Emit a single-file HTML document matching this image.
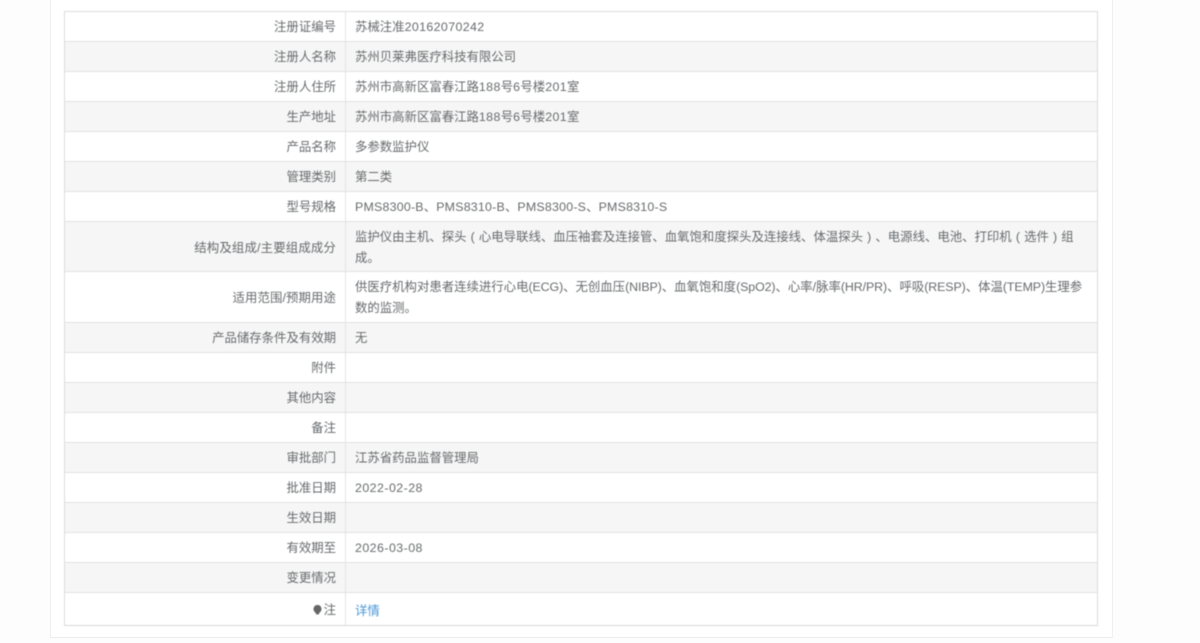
<!DOCTYPE html>
<html lang="zh"><head><meta charset="utf-8"><style>
html,body{margin:0;padding:0;width:1200px;height:643px;overflow:hidden;background:#fdfdfd}
body{font-family:"Liberation Sans","Noto Sans CJK SC",sans-serif;font-size:12.4px;color:#676a6c;position:relative;text-spacing-trim:space-all;font-kerning:none}
#panel{position:absolute;left:50px;top:-2px;width:1061px;height:639px;background:#fff;border-right:1px solid #f0f0f0;border-left:1px solid #f0f0f0;border-bottom:1px solid #ececec}
#t{position:absolute;left:64px;top:11px;width:1032px;height:613px;border:1px solid #dcdcdc;border-bottom:1px solid #d8d8d8;filter:blur(.4px)}
.r{position:absolute;left:0;width:1032px;border-bottom:1px solid #e2e2e2;box-sizing:border-box}
.g{background:#f6f6f6}
.l{position:absolute;left:0;width:271px;text-align:right;top:1px;white-space:nowrap}
.v{position:absolute;left:290px;top:1px;white-space:nowrap}
.d{position:absolute;left:280px;top:0;bottom:0;width:1px;background:#e4e4e4}
.n{letter-spacing:.38px}
.m{letter-spacing:.22px}
.c{letter-spacing:-.09px}
.p{display:inline-block;width:1em;text-align:center}
a{color:#4a98d8;text-decoration:none}
</style></head><body>
<div id="panel"></div>
<div id="t">
<div class="r" style="top:0;height:30px;line-height:29px"><div class="l">注册证编号</div><div class="d"></div><div class="v">苏械注准<span class="n">20162070242</span></div></div>
<div class="r g" style="top:30px;height:30px;line-height:29px"><div class="l">注册人名称</div><div class="d"></div><div class="v">苏州贝莱弗医疗科技有限公司</div></div>
<div class="r" style="top:60px;height:30px;line-height:29px"><div class="l">注册人住所</div><div class="d"></div><div class="v">苏州市高新区富春江路<span class="n">188</span>号<span class="n">6</span>号楼<span class="n">201</span>室</div></div>
<div class="r g" style="top:90px;height:30px;line-height:29px"><div class="l">生产地址</div><div class="d"></div><div class="v">苏州市高新区富春江路<span class="n">188</span>号<span class="n">6</span>号楼<span class="n">201</span>室</div></div>
<div class="r" style="top:120px;height:30px;line-height:29px"><div class="l">产品名称</div><div class="d"></div><div class="v">多参数监护仪</div></div>
<div class="r g" style="top:150px;height:30px;line-height:29px"><div class="l">管理类别</div><div class="d"></div><div class="v">第二类</div></div>
<div class="r" style="top:180px;height:30px;line-height:29px"><div class="l">型号规格</div><div class="d"></div><div class="v"><span class="m">PMS8300-B</span>、<span class="m">PMS8310-B</span>、<span class="m">PMS8300-S</span>、<span class="m">PMS8310-S</span></div></div>
<div class="r g" style="top:210px;height:50px;line-height:51px"><div class="l" style="letter-spacing:.17px">结构及组成/主要组成成分</div><div class="d"></div><div class="v" style="top:5px;line-height:21px">监护仪由主机、探头<span class="p">(</span>心电导联线、血压袖套及连接管、血氧饱和度探头及连接线、体温探头<span class="p">)</span>、电源线、电池、打印机<span class="p">(</span>选件<span class="p">)</span>组<br>成。</div></div>
<div class="r" style="top:260px;height:51px;line-height:50px"><div class="l" style="letter-spacing:.1px">适用范围/预期用途</div><div class="d"></div><div class="v" style="top:5px;line-height:21px">供医疗机构对患者连续进行心电<span class="c">(ECG)</span>、无创血压<span class="c">(NIBP)</span>、血氧饱和度<span class="c">(SpO2)</span>、心率/脉率<span class="c">(HR/PR)</span>、呼吸<span class="c">(RESP)</span>、体温<span class="c">(TEMP)</span>生理参<br>数的监测。</div></div>
<div class="r g" style="top:311px;height:30px;line-height:29px"><div class="l">产品储存条件及有效期</div><div class="d"></div><div class="v">无</div></div>
<div class="r" style="top:341px;height:30px;line-height:29px"><div class="l">附件</div><div class="d"></div></div>
<div class="r g" style="top:371px;height:30px;line-height:29px"><div class="l">其他内容</div><div class="d"></div></div>
<div class="r" style="top:401px;height:30px;line-height:29px"><div class="l">备注</div><div class="d"></div></div>
<div class="r g" style="top:431px;height:30px;line-height:29px"><div class="l">审批部门</div><div class="d"></div><div class="v">江苏省药品监督管理局</div></div>
<div class="r" style="top:461px;height:30px;line-height:29px"><div class="l">批准日期</div><div class="d"></div><div class="v"><span class="n" style="letter-spacing:.45px">2022-02-28</span></div></div>
<div class="r g" style="top:491px;height:30px;line-height:29px"><div class="l">生效日期</div><div class="d"></div></div>
<div class="r" style="top:521px;height:30px;line-height:29px"><div class="l">有效期至</div><div class="d"></div><div class="v"><span class="n" style="letter-spacing:.45px">2026-03-08</span></div></div>
<div class="r g" style="top:551px;height:30px;line-height:29px"><div class="l">变更情况</div><div class="d"></div></div>
<div class="r" style="top:581px;height:32px;line-height:32px;border-bottom:0"><div class="l"><svg width="11" height="12" viewBox="0 0 11 12" style="vertical-align:-2px;margin-right:1px"><path d="M5.500 1a4 4 0 0 1 2.400 7.200L6.500 10.500h-2L3.100 8.200A4 4 0 0 1 5.500 1z" fill="#666"/></svg>注</div><div class="d"></div><div class="v" style="top:2px"><a>详情</a></div></div>
</div>
</body></html>
